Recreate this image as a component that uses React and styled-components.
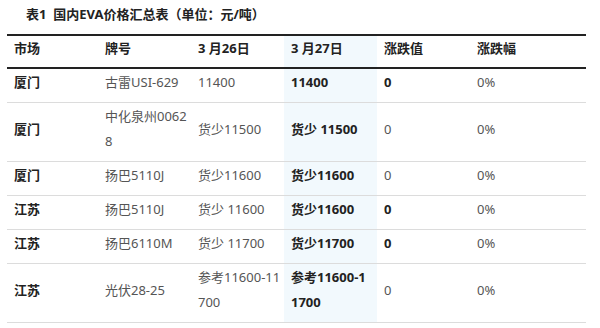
import React from "react";
import styled, { createGlobalStyle } from "styled-components";

const rows = [
  { market: "厦门", brand: "古雷USI-629", d26: "11400", d27: "11400", diff: "0", diffBold: true, pct: "0%" },
  { market: "厦门", brand: "中化泉州00628", d26: "货少11500", d27: "货少 11500", diff: "0", pct: "0%" },
  { market: "厦门", brand: "扬巴5110J", d26: "货少11600", d27: "货少11600", diff: "0", pct: "0%" },
  { market: "江苏", brand: "扬巴5110J", d26: "货少 11600", d27: "货少11600", diff: "0", diffBold: true, pct: "0%" },
  { market: "江苏", brand: "扬巴6110M", d26: "货少 11700", d27: "货少11700", diff: "0", diffBold: true, pct: "0%" },
  { market: "江苏", brand: "光伏28-25", d26: "参考11600-11700", d27: "参考11600-11700", diff: "0", pct: "0%" },
];

const GlobalStyle = createGlobalStyle`
  body {
    margin: 0;
    background: #fff;
    font-family: "Noto Sans", "Noto Sans CJK SC", sans-serif;
  }
`;

const Wrapper = styled.div`
  width: 600px;
  padding-top: 3px;
`;

const Title = styled.div`
  padding-left: 26px;
  font-size: 13px;
  font-weight: 700;
  line-height: 22px;
  color: #222;
  height: 31px;
`;

const Table = styled.table`
  margin-left: 7px;
  width: 579px;
  border-collapse: collapse;
  table-layout: fixed;
  font-size: 13px;
  border-top: 2px solid #222;
`;

const Th = styled.th`
  text-align: left;
  font-weight: 700;
  color: #222;
  padding: 0 2px 6px 7px;
  line-height: 25px;
  border-bottom: 2px solid #222;
  background: ${(p) => (p.$hl ? "#f2f9fd" : "transparent")};
`;

const Td = styled.td`
  padding: 1px ${(p) => (p.$hl ? "5px" : "2px")} 7px 7px;
  line-height: 25px;
  vertical-align: middle;
  word-break: break-all;
  border-bottom: 1px solid #dcdcdc;
  color: ${(p) => (p.$bold ? "#222" : "#555")};
  font-weight: ${(p) => (p.$bold ? 700 : 400)};
  background: ${(p) => (p.$hl ? "#f2f9fd" : "transparent")};
`;

export default function App() {
  return (
    <Wrapper>
      <GlobalStyle />
      <Title>表1&nbsp;&nbsp;国内EVA价格汇总表（单位：元/吨）</Title>
      <Table>
        <colgroup>
          <col style={{ width: 91 }} />
          <col style={{ width: 93 }} />
          <col style={{ width: 93 }} />
          <col style={{ width: 93 }} />
          <col style={{ width: 93 }} />
          <col style={{ width: 116 }} />
        </colgroup>
        <thead>
          <tr>
            <Th>市场</Th>
            <Th>牌号</Th>
            <Th>3 月26日</Th>
            <Th $hl>3 月27日</Th>
            <Th>涨跌值</Th>
            <Th>涨跌幅</Th>
          </tr>
        </thead>
        <tbody>
          {rows.map((r, i) => (
            <tr key={i}>
              <Td $bold>{r.market}</Td>
              <Td>{r.brand}</Td>
              <Td>{r.d26}</Td>
              <Td $bold $hl>{r.d27}</Td>
              <Td $bold={r.diffBold}>{r.diff}</Td>
              <Td>{r.pct}</Td>
            </tr>
          ))}
        </tbody>
      </Table>
    </Wrapper>
  );
}
